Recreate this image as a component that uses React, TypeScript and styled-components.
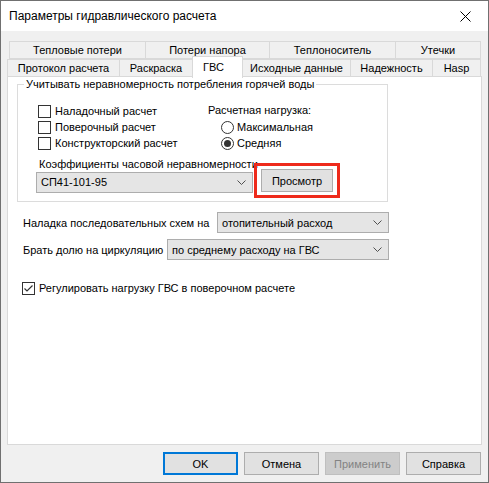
import styled, { createGlobalStyle } from "styled-components";

const GlobalStyle = createGlobalStyle`
  html, body {
    margin: 0;
    padding: 0;
    background: #ffffff;
  }
  body {
    font-family: "Liberation Sans", Arial, sans-serif;
    font-size: 11px;
    color: #000;
  }
`;

const topTabs = [
  { label: "Тепловые потери", width: 137 },
  { label: "Потери напора", width: 125 },
  { label: "Теплоноситель", width: 127 },
  { label: "Утечки", width: 86 },
];

const bottomTabs = [
  { label: "Протокол расчета", width: 113 },
  { label: "Раскраска", width: 74 },
  { label: "ГВС", width: 51, active: true },
  { label: "Исходные данные", width: 109 },
  { label: "Надежность", width: 83 },
  { label: "Hasp", width: 49 },
];

function Chevron() {
  return (
    <svg width="9" height="5" viewBox="0 0 9 5">
      <path d="M0.5 0.5 L4.5 4.5 L8.5 0.5" fill="none" stroke="#505050" strokeWidth="1" />
    </svg>
  );
}

function Combo({ value, chevronRight = 6 }: { value: string; chevronRight?: number }) {
  return (
    <ComboBox>
      <ComboText>{value}</ComboText>
      <ComboArrow $right={chevronRight}>
        <Chevron />
      </ComboArrow>
    </ComboBox>
  );
}

function CheckBox({ checked, label }: { checked?: boolean; label: string }) {
  return (
    <CheckRow>
      <Box>
        {checked && (
          <svg width="11" height="11" viewBox="0 0 11 11">
            <path d="M1.5 5.5 L4 8 L9.5 2.5" fill="none" stroke="#333" strokeWidth="1.2" />
          </svg>
        )}
      </Box>
      <span>{label}</span>
    </CheckRow>
  );
}

function Radio({ checked, label }: { checked?: boolean; label: string }) {
  return (
    <CheckRow>
      <RadioCircle>{checked && <RadioDot />}</RadioCircle>
      <span>{label}</span>
    </CheckRow>
  );
}

export default function App() {
  return (
    <>
      <GlobalStyle />
      <Window>
        <TitleBar>
          <Title>Параметры гидравлического расчета</Title>
          <CloseButton>
            <svg width="11" height="11" viewBox="0 0 11 11">
              <path d="M0.5 0.5 L10.5 10.5 M10.5 0.5 L0.5 10.5" stroke="#000" strokeWidth="1" />
            </svg>
          </CloseButton>
        </TitleBar>

        <Body>
          <Tabs>
            <TabRow $offset={2}>
              {topTabs.map((t) => (
                <Tab key={t.label} $width={t.width}>
                  {t.label}
                </Tab>
              ))}
            </TabRow>
            <TabRow $offset={0}>
              {bottomTabs.map((t) => (
                <Tab key={t.label} $width={t.width} $active={t.active}>
                  {t.label}
                </Tab>
              ))}
            </TabRow>
          </Tabs>

          <Panel>
            <Group>
              <Legend>Учитывать неравномерность потребления горячей воды</Legend>
              <GroupColumns>
                <Column>
                  <CheckBox label="Наладочный расчет" />
                  <CheckBox label="Поверочный расчет" />
                  <CheckBox label="Конструкторский расчет" />
                </Column>
                <Column>
                  <Caption>Расчетная нагрузка:</Caption>
                  <RadioList>
                    <Radio label="Максимальная" />
                    <Radio label="Средняя" checked />
                  </RadioList>
                </Column>
              </GroupColumns>
              <CoefLabel>Коэффициенты часовой неравномерности</CoefLabel>
              <CoefRow>
                <CoefCombo>
                  <Combo value="СП41-101-95" chevronRight={6} />
                </CoefCombo>
                <Highlight>
                  <Button $width={72}>Просмотр</Button>
                </Highlight>
              </CoefRow>
            </Group>

            <FieldRow $gap={10}>
              <FieldLabel $width={194}>Наладка последовательных схем на</FieldLabel>
              <Combo value="отопительный расход" />
            </FieldRow>
            <FieldRow $gap={6}>
              <FieldLabel $width={144}>Брать долю на циркуляцию</FieldLabel>
              <Combo value="по среднему расходу на ГВС" />
            </FieldRow>
            <Regulate>
              <CheckBox checked label="Регулировать нагрузку ГВС в поверочном расчете" />
            </Regulate>
          </Panel>

          <Footer>
            <Button $width={75} $default>
              OK
            </Button>
            <Button $width={75}>Отмена</Button>
            <Button $width={75} $disabled>
              Применить
            </Button>
            <Button $width={75}>Справка</Button>
          </Footer>
        </Body>
      </Window>
    </>
  );
}

const Window = styled.div`
  width: 489px;
  height: 483px;
  box-sizing: border-box;
  border: 1px solid #707070;
  display: flex;
  flex-direction: column;
  background: #f0f0f0;
`;

const TitleBar = styled.div`
  height: 30px;
  flex: none;
  background: #ffffff;
  display: flex;
  align-items: center;
  justify-content: space-between;
  padding-left: 8px;
`;

const Title = styled.div`
  font-size: 12px;
  color: #000;
`;

const CloseButton = styled.div`
  width: 46px;
  height: 30px;
  display: flex;
  align-items: center;
  justify-content: center;
`;

const Body = styled.div`
  flex: 1;
  display: flex;
  flex-direction: column;
  padding: 10px 6px 7px 6px;
  min-height: 0;
`;

const Tabs = styled.div`
  display: flex;
  flex-direction: column;
  margin-right: 1px;
`;

const TabRow = styled.div<{ $offset: number }>`
  display: flex;
  height: 18px;
  padding-left: ${(p) => p.$offset}px;
  position: relative;
`;

const Tab = styled.div<{ $width: number; $active?: boolean }>`
  box-sizing: border-box;
  width: ${(p) => p.$width}px;
  height: ${(p) => (p.$active ? 22 : 18)}px;
  margin-left: -1px;
  margin-top: ${(p) => (p.$active ? -3 : 0)}px;
  margin-bottom: ${(p) => (p.$active ? -1 : 0)}px;
  border: 1px solid #d9d9d9;
  border-bottom: ${(p) => (p.$active ? "none" : "1px solid #d9d9d9")};
  background: ${(p) => (p.$active ? "#ffffff" : "#f0f0f0")};
  position: relative;
  z-index: ${(p) => (p.$active ? 2 : 0)};
  display: flex;
  align-items: center;
  justify-content: center;
  padding-right: ${(p) => (p.$active ? 8 : 0)}px;
  padding-bottom: ${(p) => (p.$active ? 2 : 0)}px;
  white-space: nowrap;
  &:first-child {
    margin-left: 0;
  }
`;

const Panel = styled.div`
  flex: 1;
  background: #ffffff;
  border: 1px solid #d9d9d9;
  padding: 0 0 0 9px;
  display: flex;
  flex-direction: column;
  align-items: flex-start;
  position: relative;
  z-index: 1;
  margin-top: -1px;
`;

const Group = styled.fieldset`
  margin: 0;
  width: 371px;
  box-sizing: border-box;
  border: 1px solid #dcdcdc;
  padding: 12px 0 3px 20px;
  min-width: 0;
`;

const Legend = styled.legend`
  padding: 0 2px;
  margin-left: -14px;
  line-height: 14px;
  white-space: nowrap;
`;

const GroupColumns = styled.div`
  display: grid;
  grid-template-columns: 170px 1fr;
`;

const Column = styled.div`
  display: flex;
  flex-direction: column;
`;

const Caption = styled.div`
  height: 16px;
  line-height: 16px;
  margin-top: -1px;
`;

const RadioList = styled.div`
  display: flex;
  flex-direction: column;
  padding-left: 13px;
  margin-top: 1px;
`;

const CheckRow = styled.div`
  display: flex;
  align-items: center;
  height: 16px;
  gap: 4px;
  white-space: nowrap;
`;

const Box = styled.div`
  width: 13px;
  height: 13px;
  box-sizing: border-box;
  border: 1px solid #333333;
  background: #ffffff;
  display: flex;
  align-items: center;
  justify-content: center;
`;

const RadioCircle = styled.div`
  width: 13px;
  height: 13px;
  box-sizing: border-box;
  border: 1px solid #333333;
  border-radius: 50%;
  background: #ffffff;
  display: flex;
  align-items: center;
  justify-content: center;
  margin-right: -1px;
`;

const RadioDot = styled.div`
  width: 7px;
  height: 7px;
  border-radius: 50%;
  background: #333333;
`;

const CoefLabel = styled.div`
  margin-top: 6px;
  margin-left: 1px;
  line-height: 14px;
  white-space: nowrap;
`;

const CoefRow = styled.div`
  display: flex;
  align-items: center;
  margin-top: -8px;
  margin-left: -2px;
`;

const CoefCombo = styled.div`
  width: 217px;
  margin-top: 3px;
  margin-right: 1px;
  display: flex;
`;

const ComboBox = styled.div`
  flex: 1;
  height: 21px;
  box-sizing: border-box;
  border: 1px solid #adadad;
  background: #e5e5e5;
  display: flex;
  align-items: center;
  justify-content: space-between;
  padding-left: 4px;
`;

const ComboText = styled.span`
  white-space: nowrap;
`;

const ComboArrow = styled.span<{ $right: number }>`
  display: flex;
  margin-right: ${(p) => p.$right}px;
`;

const Highlight = styled.div`
  border: 3px solid #ee2a1b;
  padding: 3px 4px;
  display: flex;
`;

const Button = styled.div<{ $width: number; $default?: boolean; $disabled?: boolean }>`
  width: ${(p) => p.$width}px;
  height: 23px;
  box-sizing: border-box;
  border: ${(p) =>
    p.$default ? "2px solid #0078d7" : p.$disabled ? "1px solid #bfbfbf" : "1px solid #adadad"};
  background: ${(p) => (p.$disabled ? "#cccccc" : "#e1e1e1")};
  color: ${(p) => (p.$disabled ? "#838383" : "#000000")};
  display: flex;
  align-items: center;
  justify-content: center;
  white-space: nowrap;
`;

const FieldRow = styled.div<{ $gap: number }>`
  display: flex;
  align-items: center;
  width: 366px;
  margin-left: 6px;
  margin-top: ${(p) => p.$gap}px;
`;

const FieldLabel = styled.div<{ $width: number }>`
  width: ${(p) => p.$width}px;
  flex: none;
  white-space: nowrap;
`;

const Regulate = styled.div`
  margin-top: 20px;
  margin-left: 5px;
`;

const Footer = styled.div`
  display: flex;
  justify-content: flex-end;
  gap: 6px;
  margin-top: 7px;
  margin-right: 1px;
`;
